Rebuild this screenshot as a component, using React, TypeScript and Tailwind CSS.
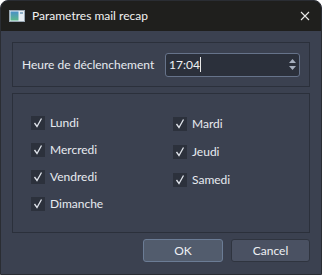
import { useState } from "react";

const leftDays = ["Lundi", "Mercredi", "Vendredi", "Dimanche"];
const rightDays = ["Mardi", "Jeudi", "Samedi"];

function Check({ label }: { label: string }) {
  return (
    <div className="flex items-center gap-[5px] h-[14px]">
      <div className="w-[14px] h-[14px] bg-[#2c313c] flex items-center justify-center">
        <svg width="10" height="10" viewBox="0 0 10 10">
          <polyline points="1.5,5 4,8.5 8.5,0.5" fill="none" stroke="#dfe3ea" strokeWidth="1.3" />
        </svg>
      </div>
      <span className="text-[12px] text-[#e8ebf0] leading-none">{label}</span>
    </div>
  );
}

export default function App() {
  const [time] = useState("17:04");

  return (
    <div
      className="w-[322px] h-[275px] bg-[#3b4150] rounded-t-[8px] overflow-hidden flex flex-col border border-[#2a2d33]"
      style={{ fontFamily: 'Lato, "Noto Sans", sans-serif' }}
    >
      {/* Title bar */}
      <div className="h-[30px] bg-[#1f1f1d] flex items-center pl-[8px] pr-[11px] shrink-0">
        <svg width="16" height="12" viewBox="0 0 16 12">
          <defs>
            <linearGradient id="ic" x1="0" y1="0" x2="0" y2="1">
              <stop offset="0" stopColor="#4a90c8" />
              <stop offset="1" stopColor="#5cb88a" />
            </linearGradient>
          </defs>
          <rect x="0.5" y="0.5" width="15" height="11" fill="#e6eef4" stroke="#9aa8b4" />
          <rect x="1.5" y="1.5" width="8" height="9" fill="url(#ic)" />
          <rect x="11" y="2" width="3" height="2" fill="#8fb0c8" />
        </svg>
        <span className="ml-[7px] text-[12px] text-[#f2f2f2]">Parametres mail recap</span>
        <svg className="ml-auto" width="10" height="10" viewBox="0 0 10 10">
          <path d="M1 1 L9 9 M9 1 L1 9" stroke="#e8e8e8" strokeWidth="1.1" />
        </svg>
      </div>

      <div className="flex-1 flex flex-col px-[11px] pt-[11px]">
        {/* Group 1 */}
        <div className="h-[45px] border border-[#2b303b] flex items-center pl-[9px] pr-[9px]">
          <span className="text-[12px] text-[#e8ebf0] whitespace-nowrap">Heure de déclenchement</span>
          <div className="ml-auto shrink-0 w-[135px] h-[24px] bg-[#2b303b] border border-[#66738a] rounded-[3px] flex items-center">
            <div className="flex-1 flex items-center pl-[3px]">
              <span className="text-[12px] text-[#eef0f4]">{time}</span>
              <div className="w-px h-[15px] bg-[#e8e8e8]" />
            </div>
            <div className="w-[11px] h-full flex flex-col items-center justify-center gap-[3px] mr-[1px]">
              <svg width="7" height="4" viewBox="0 0 7 4">
                <polygon points="0,4 3.5,0 7,4" fill="#a7b0bf" />
              </svg>
              <svg width="7" height="4" viewBox="0 0 7 4">
                <polygon points="0,0 3.5,4 7,0" fill="#a7b0bf" />
              </svg>
            </div>
          </div>
        </div>

        {/* Group 2 */}
        <div className="mt-[6px] h-[140px] border border-[#2b303b] pl-[18px] pt-[22px] grid grid-cols-[142px_1fr]">
          <div className="flex flex-col gap-[13px]">
            {leftDays.map((d) => (
              <Check key={d} label={d} />
            ))}
          </div>
          <div className="flex flex-col gap-[14px] pt-[1px]">
            {rightDays.map((d) => (
              <Check key={d} label={d} />
            ))}
          </div>
        </div>

        {/* Buttons */}
        <div className="mt-[6px] flex justify-end gap-[8px]">
          <button className="w-[80px] h-[23px] bg-[#525c6d] border border-[#6b7c95] rounded-[3px] text-[12px] text-[#eef0f4]">
            OK
          </button>
          <button className="w-[79px] h-[23px] bg-[#4a5162] border border-[#2f343f] rounded-[3px] text-[12px] text-[#eef0f4]">
            Cancel
          </button>
        </div>
      </div>
    </div>
  );
}
